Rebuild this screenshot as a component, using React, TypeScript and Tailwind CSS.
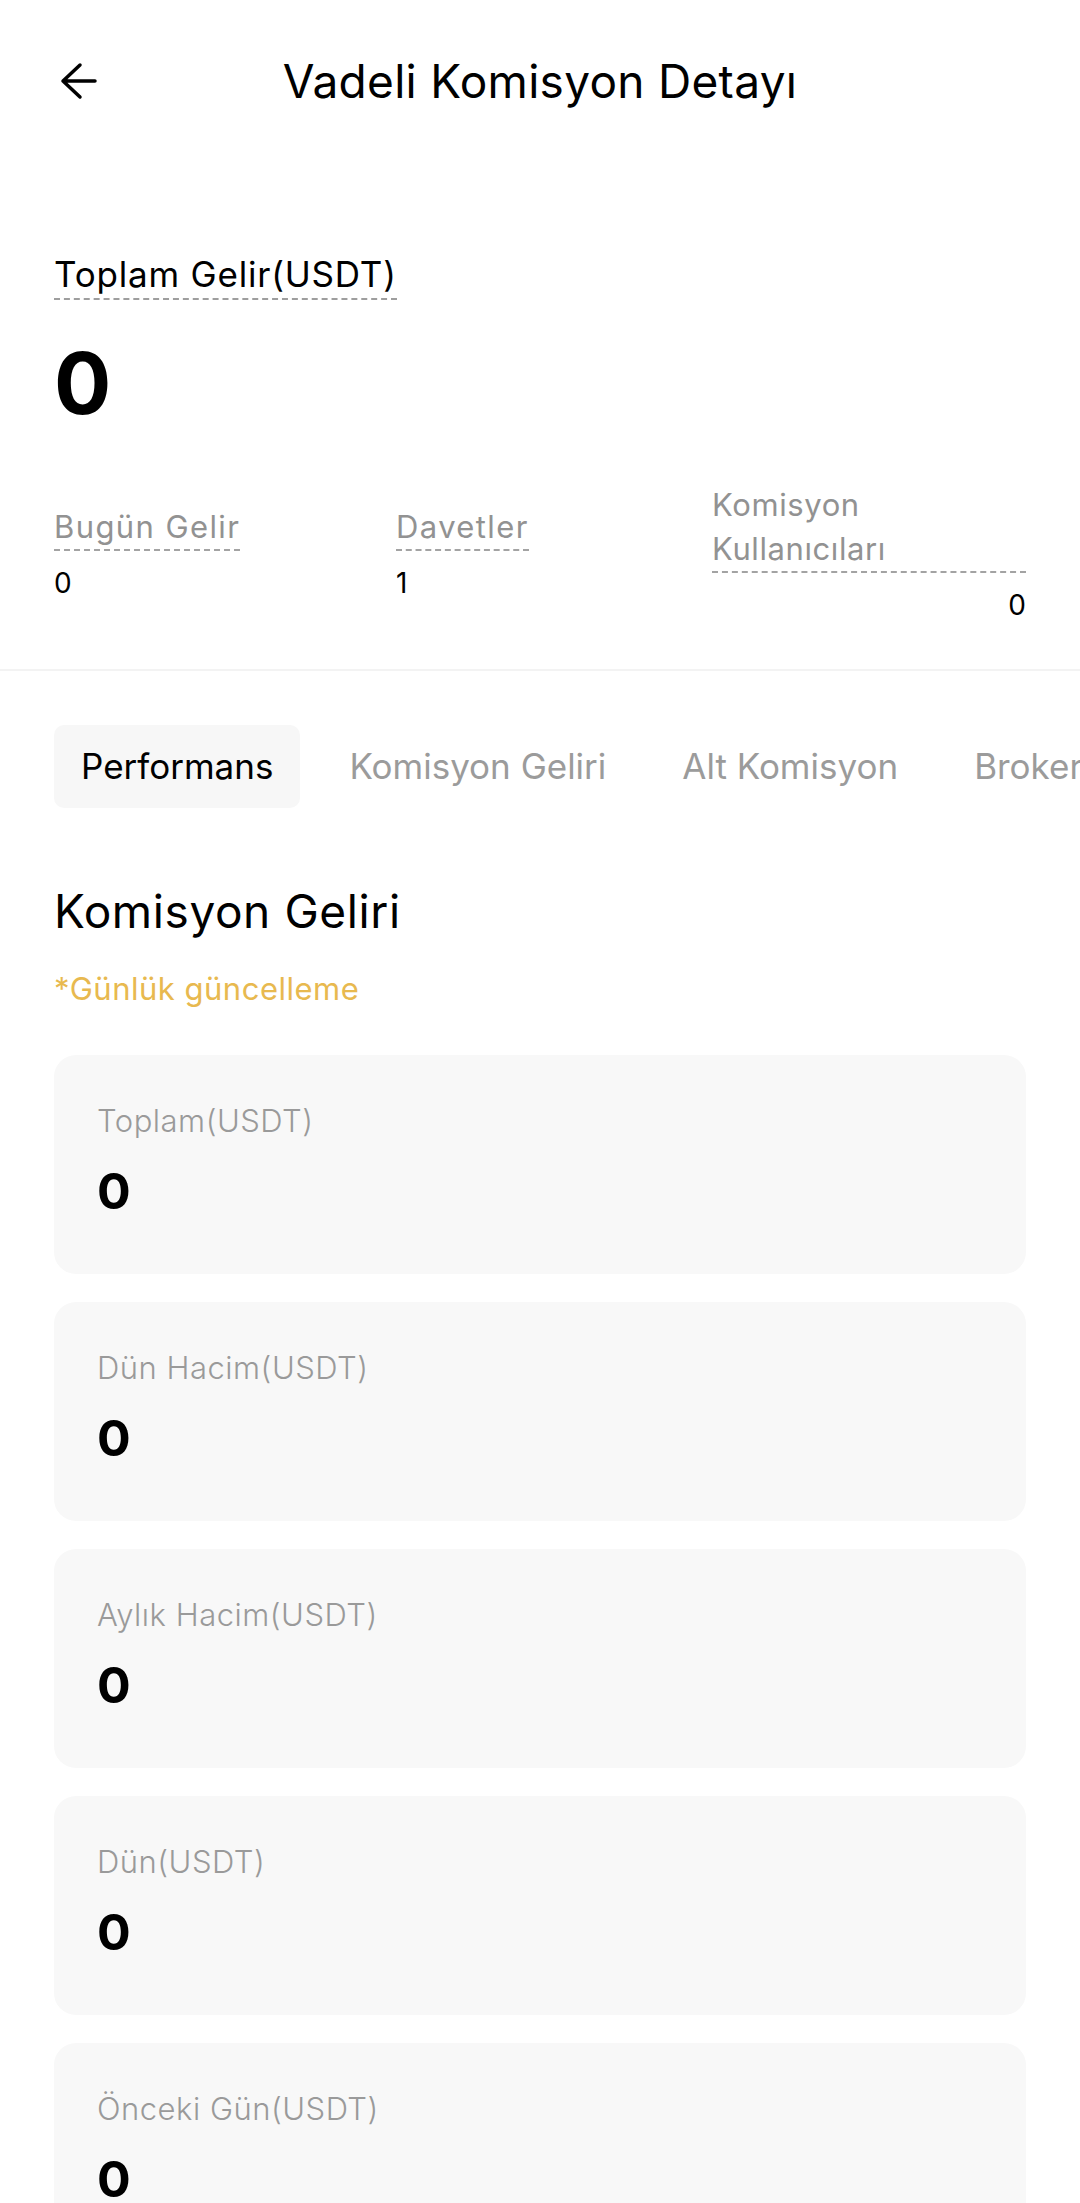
import React from 'react'

const stats = [
  { label: 'Bugün Gelir', value: '0' },
  { label: 'Davetler', value: '1' },
]

const tabs = ['Performans', 'Komisyon Geliri', 'Alt Komisyon', 'Broker']

const cards = [
  'Toplam(USDT)',
  'Dün Hacim(USDT)',
  'Aylık Hacim(USDT)',
  'Dün(USDT)',
  'Önceki Gün(USDT)',
  'Bu Ay(USDT)',
]

function BackArrow() {
  return (
    <svg width="38" height="38" viewBox="0 0 38 38" fill="none">
      <path
        d="M20 3 L3 19 L20 35 M3 19 H35"
        stroke="#000"
        strokeWidth="3.5"
        strokeLinecap="round"
        strokeLinejoin="round"
      />
    </svg>
  )
}

export default function App() {
  return (
    <div className="min-h-screen w-full bg-white text-black font-['Inter',sans-serif]">
      {/* Header */}
      <header className="h-[162px] grid grid-cols-[1fr_auto_1fr] items-center px-[60px]">
        <button className="justify-self-start">
          <BackArrow />
        </button>
        <h1 className="text-[46px] leading-none font-normal tracking-[0.3px]">Vadeli Komisyon Detayı</h1>
        <div />
      </header>

      {/* Summary */}
      <section className="px-[54px] pt-[92px] pb-[46px]">
        <div className="inline-block text-[35px] leading-[41px] tracking-[0.8px] pb-[3px] border-b-2 border-dashed border-[#9e9e9e]">
          Toplam Gelir(USDT)
        </div>
        <div className="mt-[41px] text-[85px] leading-none font-bold">0</div>

        <div className="mt-[57px] grid grid-cols-[342px_316px_1fr] items-center">
          {stats.map((s) => (
            <div key={s.label} className="flex flex-col items-start">
              <span className="inline-block text-[31px] leading-[44px] tracking-[1.4px] text-[#929292] border-b-2 border-dashed border-[#a3a3a3]">
                {s.label}
              </span>
              <span className="mt-[14px] text-[28px] leading-[36px]">{s.value}</span>
            </div>
          ))}
          <div className="flex flex-col">
            <span className="block text-[31px] leading-[44px] tracking-[0.6px] text-[#929292] border-b-2 border-dashed border-[#a3a3a3]">
              Komisyon
              <br />
              Kullanıcıları
            </span>
            <span className="mt-[14px] text-[28px] leading-[36px] text-right">0</span>
          </div>
        </div>
      </section>

      <div className="h-[2px] bg-[#f3f3f3]" />

      {/* Tabs */}
      <nav className="pt-[54px] px-[54px] flex gap-[22px] overflow-hidden whitespace-nowrap">
        {tabs.map((t, i) => (
          <div
            key={t}
            className={
              i === 0
                ? 'h-[83px] px-[27px] flex items-center rounded-[10px] bg-[#f7f7f7] text-[35px] text-black'
                : 'h-[83px] px-[27px] flex items-center rounded-[10px] text-[35px] text-[#9b9b9b]'
            }
          >
            {t}
          </div>
        ))}
      </nav>

      {/* Commission income */}
      <section className="px-[54px]">
        <h2 className="mt-[77px] text-[46px] leading-[53px] font-normal tracking-[0.6px]">Komisyon Geliri</h2>
        <p className="mt-[32px] text-[31px] leading-[38px] tracking-[0.5px] text-[#e8b94f]">*Günlük güncelleme</p>

        <div className="mt-[47px] flex flex-col gap-[28px] pb-[40px]">
          {cards.map((c) => (
            <div key={c} className="rounded-[22px] bg-[#f8f8f8] pt-[48px] pb-[58px] px-[43px]">
              <div className="text-[31px] leading-[36px] font-light tracking-[0.5px] text-[#9a9a9a]">{c}</div>
              <div className="mt-[27px] text-[50px] leading-none font-bold">0</div>
            </div>
          ))}
        </div>
      </section>
    </div>
  )
}
